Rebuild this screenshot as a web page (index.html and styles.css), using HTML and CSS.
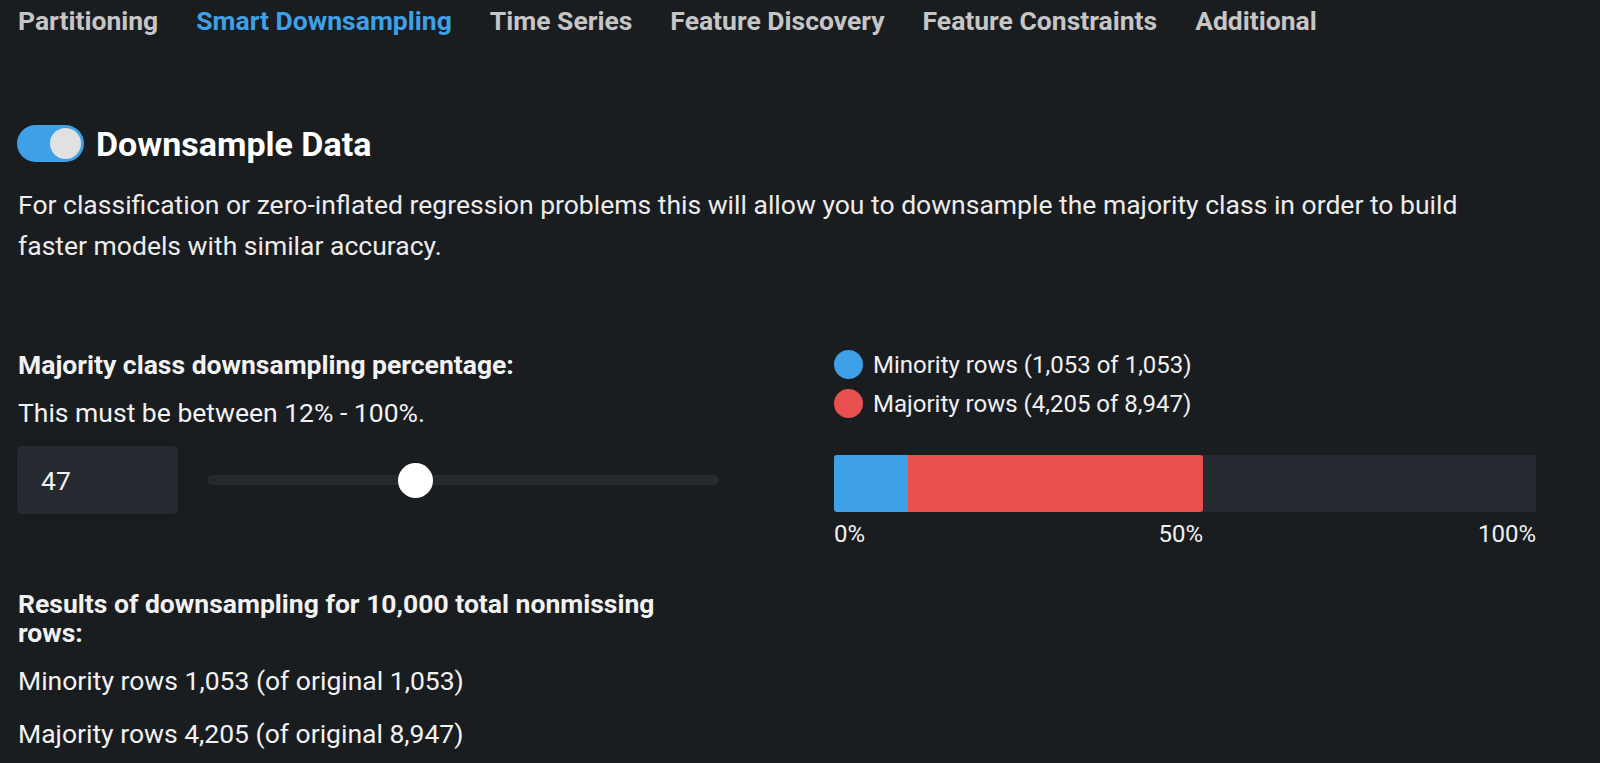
FILE: index.html
```html
<!DOCTYPE html>
<html lang="en">
<head>
<meta charset="utf-8">
<title>Smart Downsampling</title>
<link rel="stylesheet" href="styles.css">
</head>
<body>
<nav class="tabs">
  <span class="tab">Partitioning</span>
  <span class="tab active">Smart Downsampling</span>
  <span class="tab">Time Series</span>
  <span class="tab">Feature Discovery</span>
  <span class="tab">Feature Constraints</span>
  <span class="tab">Additional</span>
</nav>
<main class="content">
  <div class="toggle-row">
    <span class="toggle"><span class="knob"></span></span>
    <h1 class="title">Downsample Data</h1>
  </div>
  <p class="desc">For classification or zero-inflated regression problems this will allow you to downsample the majority class in order to build faster models with similar accuracy.</p>
  <div class="grid">
    <div class="left">
      <div class="label">Majority class downsampling percentage:</div>
      <div class="hint">This must be between 12% - 100%.</div>
      <div class="input-row">
        <div class="num-input">47</div>
        <div class="slider">
          <div class="track"></div>
          <div class="thumb" style="left: 40.6%"></div>
        </div>
      </div>
      <div class="results-title">Results of downsampling for 10,000 total nonmissing rows:</div>
      <div class="result r1">Minority rows 1,053 (of original 1,053)</div>
      <div class="result r2">Majority rows 4,205 (of original 8,947)</div>
    </div>
    <div class="right">
      <div class="legend-item"><span class="dot blue"></span>Minority rows (1,053 of 1,053)</div>
      <div class="legend-item"><span class="dot red"></span>Majority rows (4,205 of 8,947)</div>
      <div class="bar">
        <div class="seg blue" style="width: 10.53%"></div>
        <div class="seg red" style="width: 42.05%"></div>
      </div>
      <div class="scale">
        <span class="s0">0%</span>
        <span class="s50" style="width: 52.58%">50%</span>
        <span class="s100">100%</span>
      </div>
    </div>
  </div>
</main>
</body>
</html>
```
FILE: styles.css
```css
html, body {
  margin: 0;
  padding: 0;
  background: #1a1d20;
  color: #f2f2f2;
  font-family: Roboto, "Liberation Sans", Arial, sans-serif;
  height: 763px;
  overflow: hidden;
}
.tabs {
  display: flex;
  align-items: center;
  gap: 38px;
  height: 41px;
  padding-left: 18px;
}
.tab {
  font-size: 26.5px;
  font-weight: 700;
  color: #c6c6c6;
  white-space: nowrap;
}
.tab.active {
  color: #3ea1e7;
}
.content {
  padding-left: 17px;
}
.toggle-row {
  display: flex;
  align-items: center;
  margin-top: 84px;
  height: 37px;
}
.toggle {
  width: 67px;
  height: 37px;
  border-radius: 19px;
  background: #3ea1e7;
  display: flex;
  align-items: center;
  justify-content: flex-end;
  padding-right: 3px;
  box-sizing: border-box;
}
.knob {
  width: 31px;
  height: 31px;
  border-radius: 50%;
  background: #e1e1e1;
}
.title {
  margin: 0 0 0 12px;
  font-size: 34px;
  font-weight: 700;
  color: #ffffff;
  white-space: nowrap;
}
.desc {
  margin: 22px 0 0 1px;
  font-size: 26.5px;
  line-height: 41px;
  width: 1480px;
  color: #ececec;
}
.grid {
  display: grid;
  grid-template-columns: 702px 702px;
  column-gap: 115px;
  align-items: start;
  margin-top: 83px;
}
.label {
  font-size: 26.5px;
  font-weight: 700;
  line-height: 32px;
  padding-left: 1px;
}
.hint {
  font-size: 26.5px;
  line-height: 32px;
  margin-top: 16px;
  padding-left: 1px;
}
.input-row {
  display: flex;
  align-items: center;
  margin-top: 17px;
}
.num-input {
  flex: 0 0 161px;
  height: 68px;
  box-sizing: border-box;
  background: #252930;
  border-radius: 4px;
  padding-left: 24px;
  display: flex;
  align-items: center;
  font-size: 26.5px;
}
.slider {
  position: relative;
  margin-left: 29px;
  flex: 0 0 512px;
  height: 35px;
  display: flex;
  align-items: center;
}
.track {
  width: 100%;
  height: 10px;
  border-radius: 5px;
  background: #252930;
}
.thumb {
  position: absolute;
  top: 0;
  width: 35px;
  height: 35px;
  margin-left: -17px;
  border-radius: 50%;
  background: #ffffff;
}
.right {
  margin-top: -4px;
}
.legend-item {
  display: flex;
  align-items: center;
  height: 39px;
  font-size: 24px;
  color: #f0f0f0;
  white-space: nowrap;
}
.dot {
  width: 29px;
  height: 29px;
  border-radius: 50%;
  margin-right: 10px;
}
.blue { background: #3ea1e7; }
.red { background: #e84f4f; }
.bar {
  display: flex;
  height: 57px;
  margin-top: 32px;
  background: #252930;
  border-radius: 3px;
  overflow: hidden;
}
.seg { height: 100%; }
.seg.red { border-radius: 0 3px 3px 0; }
.scale {
  display: flex;
  font-size: 24px;
  line-height: 30px;
  margin-top: 7px;
  color: #f0f0f0;
}
.s0 { width: 0; white-space: nowrap; }
.s50 { text-align: right; }
.s100 { flex: 1; text-align: right; }
.results-title {
  font-size: 26.5px;
  font-weight: 700;
  line-height: 29px;
  width: 680px;
  margin-top: 75px;
  padding-left: 1px;
}
.result {
  font-size: 26.5px;
  line-height: 32px;
  padding-left: 1px;
}
.r1 { margin-top: 18px; }
.r2 { margin-top: 21px; }
```
